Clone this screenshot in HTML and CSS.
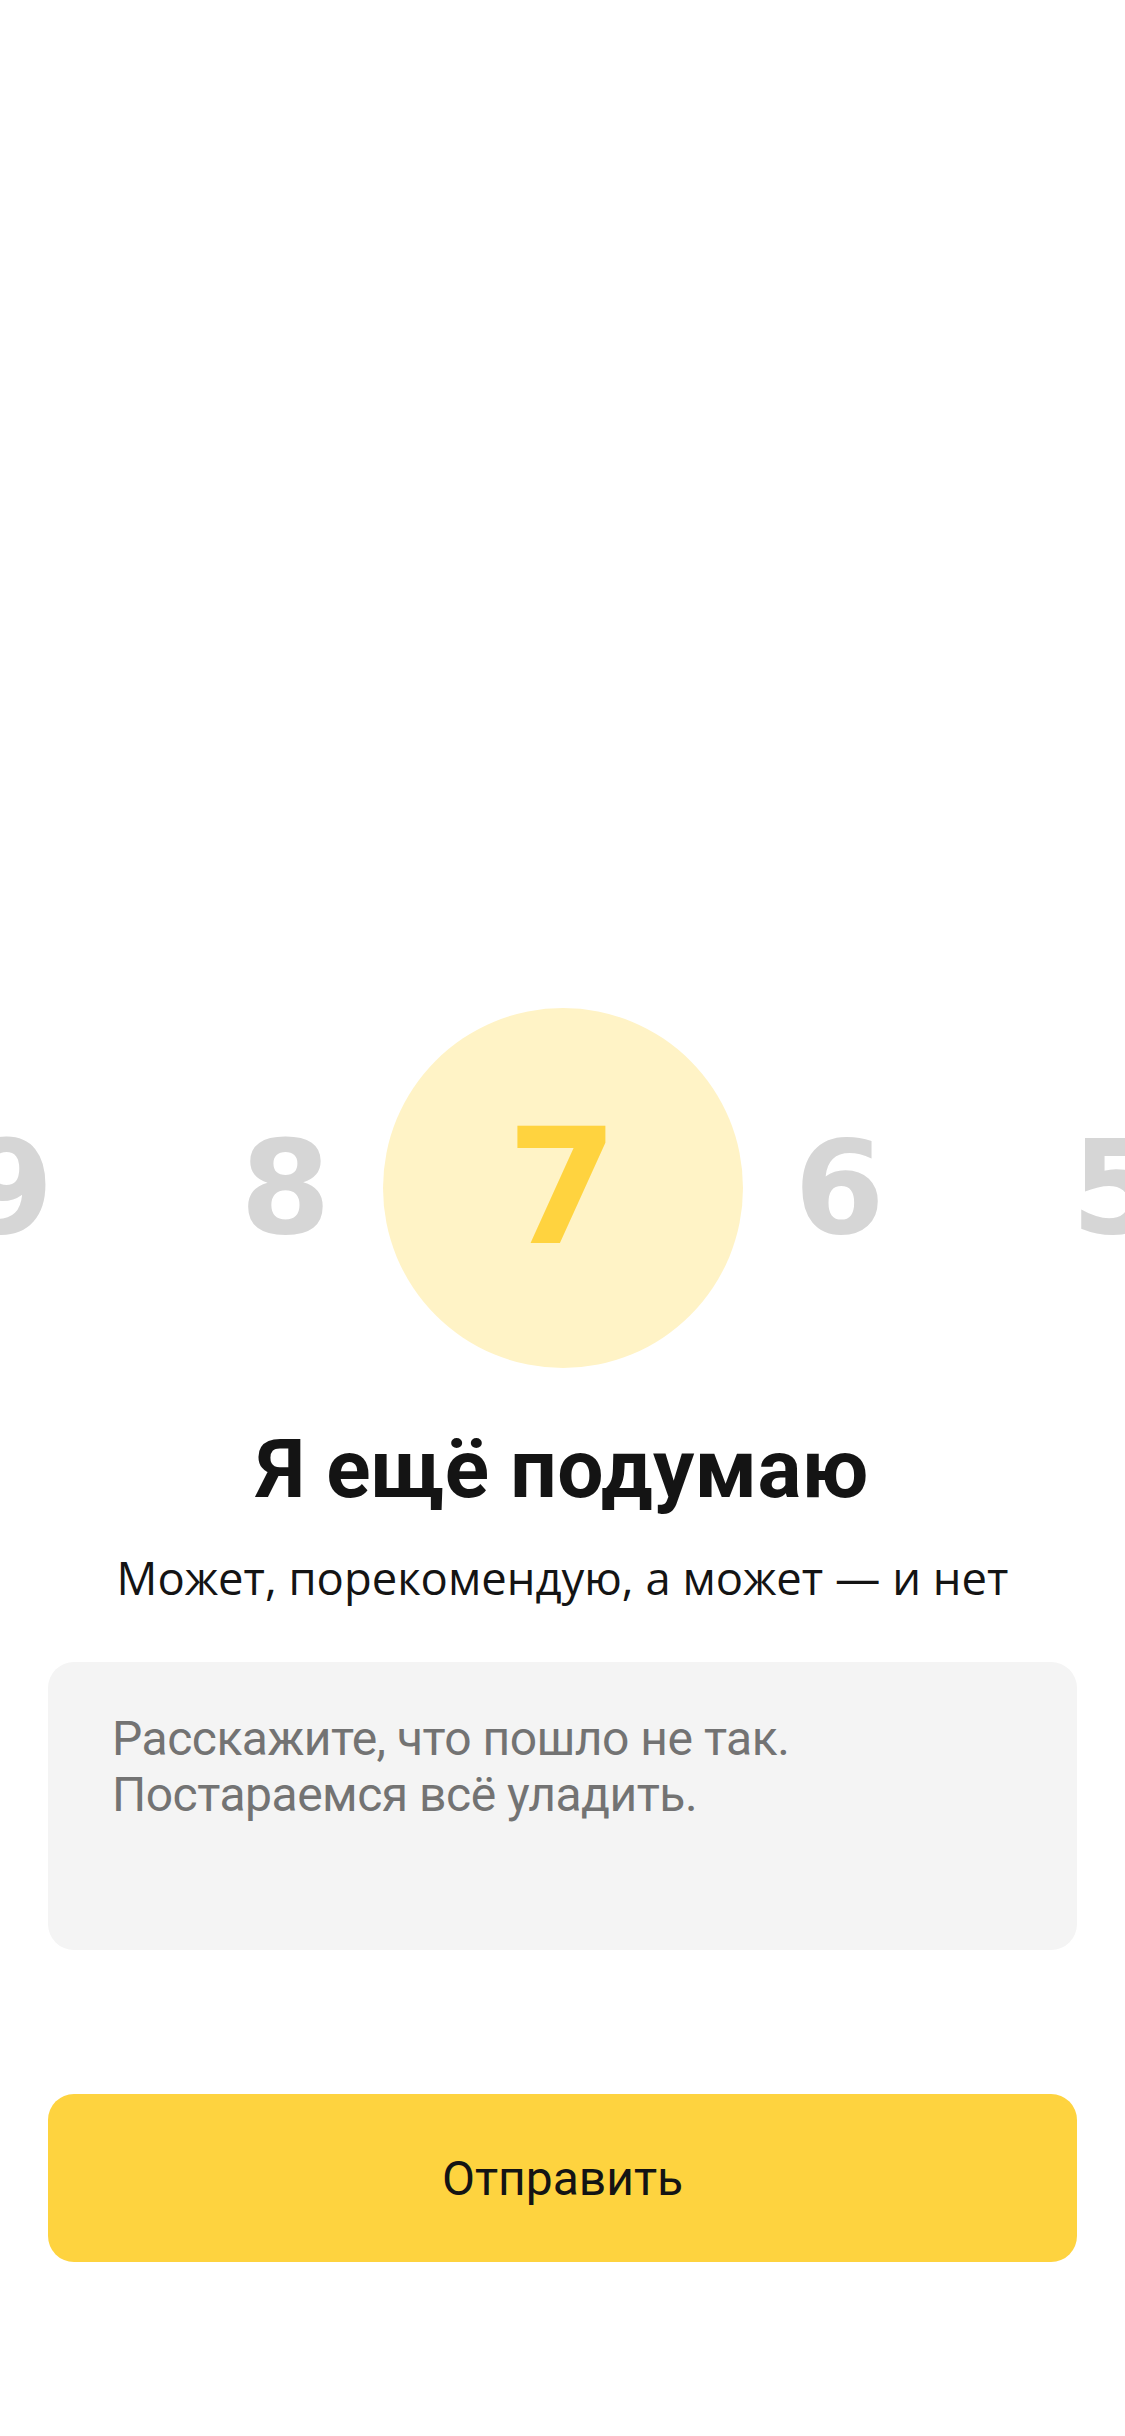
FILE: index.html
```html
<!DOCTYPE html>
<html lang="ru">
<head>
<meta charset="utf-8">
<title>Оценка</title>
<link rel="stylesheet" href="styles.css">
</head>
<body>
<main class="sheet">
  <div class="scale">
    <div class="num">9</div>
    <div class="num">8</div>
    <div class="num num-active"><span>7</span></div>
    <div class="num">6</div>
    <div class="num">5</div>
  </div>
  <h1 class="title">Я ещё подумаю</h1>
  <p class="subtitle">Может, порекомендую, а может — и нет</p>
  <div class="comment">
    <div class="placeholder">Расскажите, что пошло не так.<br>Постараемся всё уладить.</div>
  </div>
  <button class="submit" type="button">Отправить</button>
</main>
</body>
</html>
```
FILE: styles.css
```css
html, body {
  margin: 0;
  padding: 0;
  background: #ffffff;
}
body {
  width: 1125px;
  height: 2436px;
  overflow: hidden;
}
.sheet {
  height: 2436px;
  box-sizing: border-box;
  display: flex;
  flex-direction: column;
  justify-content: flex-end;
  padding: 0 48px 174px;
}
.scale {
  display: flex;
  justify-content: center;
  align-items: center;
  height: 360px;
  margin: 0 -48px;
  overflow: hidden;
}
.num {
  flex: 0 0 277px;
  text-align: center;
  font-family: "DejaVu Sans", sans-serif;
  font-weight: 700;
  font-size: 130px;
  line-height: 1;
  color: #d6d6d6;
}
.num-active {
  flex: 0 0 360px;
  height: 360px;
  margin: 0 -41.5px;
  border-radius: 50%;
  background: #fff3c6;
  display: flex;
  align-items: center;
  justify-content: center;
  font-size: 160px;
  color: #ffd33f;
}
.title {
  margin: 53px 0 0;
  font-family: Roboto, sans-serif;
  font-weight: 700;
  font-size: 82px;
  line-height: 96px;
  text-align: center;
  color: #141414;
  letter-spacing: 0.4px;
}
.subtitle {
  margin: 29px 0 0;
  font-family: "Open Sans", sans-serif;
  font-size: 45.4px;
  line-height: 63px;
  text-align: center;
  color: #141414;
}
.comment {
  margin-top: 53px;
  height: 288px;
  box-sizing: border-box;
  padding: 49px 64px 0;
  background: #f4f4f4;
  border-radius: 26px;
}
.placeholder {
  font-family: Roboto, sans-serif;
  font-size: 48px;
  line-height: 56px;
  letter-spacing: -0.5px;
  color: #737373;
}
.submit {
  margin-top: 144px;
  height: 168px;
  border: 0;
  border-radius: 26px;
  background: #fed33f;
  font-family: Roboto, sans-serif;
  font-size: 48px;
  color: #141414;
  padding: 0;
}
```
